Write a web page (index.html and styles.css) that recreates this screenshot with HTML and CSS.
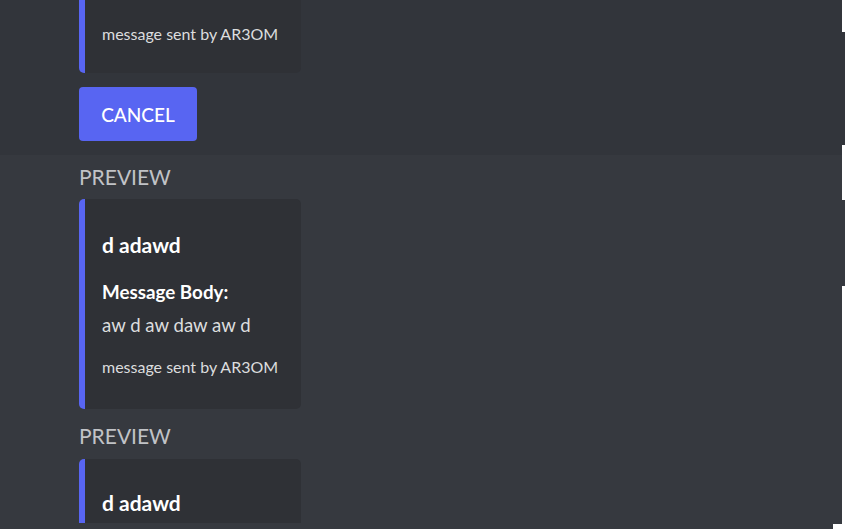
FILE: index.html
```html
<!DOCTYPE html>
<html>
<head>
<meta charset="utf-8">
<link rel="stylesheet" href="styles.css">
</head>
<body>
<div class="page">
  <div class="main">
    <section class="editor">
      <div class="embed embed-cut">
        <div class="embed-footer">message sent by AR3OM</div>
      </div>
      <button class="btn">CANCEL</button>
    </section>
    <section class="previews">
      <div class="preview">
        <div class="label">PREVIEW</div>
        <div class="embed">
          <div class="embed-title">d adawd</div>
          <div class="field-name">Message Body:</div>
          <div class="field-value">aw d aw daw aw d</div>
          <div class="embed-footer">message sent by AR3OM</div>
        </div>
      </div>
      <div class="preview">
        <div class="label">PREVIEW</div>
        <div class="embed embed-partial">
          <div class="embed-title">d adawd</div>
        </div>
      </div>
    </section>
    <div class="bottom-row"><span class="bottom-mark"></span></div>
  </div>
  <div class="edge">
    <span class="seg seg-white s1"></span>
    <span class="seg seg-top s2"></span>
    <span class="seg seg-white s3"></span>
    <span class="seg seg-low s4"></span>
    <span class="seg seg-white s5"></span>
  </div>
</div>
</body>
</html>
```
FILE: styles.css
```css
* { box-sizing: border-box; }
html, body { margin: 0; padding: 0; }
body {
  background: #ffffff;
  font-family: "Lato", "Open Sans", sans-serif;
  color: #dcddde;
  width: 845px;
  height: 529px;
  overflow: hidden;
}
.page {
  display: flex;
  height: 529px;
}
.main {
  width: 842px;
  display: flex;
  flex-direction: column;
  background: #36393f;
}
.editor {
  height: 155px;
  background: #32353b;
  padding-left: 79px;
  display: flex;
  flex-direction: column;
  align-items: flex-start;
}
.embed {
  width: 222px;
  background: #2f3136;
  border-left: 6px solid #5865f2;
  border-radius: 5px;
  padding: 34px 10px 32px 17px;
  white-space: nowrap;
}
.embed-cut {
  border-top-left-radius: 0;
  border-top-right-radius: 0;
  padding-top: 24px;
  padding-bottom: 29px;
}
.embed-partial {
  height: 64px;
  padding-top: 32px;
  overflow: hidden;
  border-bottom-left-radius: 0;
  border-bottom-right-radius: 0;
}
.embed-footer {
  font-size: 16px;
  line-height: 20px;
  color: #dcddde;
}
.btn {
  margin-top: 14px;
  width: 118px;
  height: 54px;
  border: 0;
  border-radius: 4px;
  background: #5865f2;
  color: #ffffff;
  font-family: inherit;
  font-size: 19px;
  font-weight: 500;
  padding: 0;
}
.previews {
  flex: 1;
  padding: 9px 0 0 79px;
  display: flex;
  flex-direction: column;
  gap: 14px;
  overflow: hidden;
}
.preview-last { margin-top: 0; }
.label {
  font-size: 21px;
  line-height: 25px;
  color: #c1c3c7;
  margin-bottom: 10px;
}
.preview + .preview .label {
  margin-bottom: 11px;
}
.embed-title {
  font-size: 21px;
  line-height: 24px;
  font-weight: 700;
  color: #ffffff;
  margin-bottom: 23px;
}
.field-name {
  font-size: 18.8px;
  line-height: 23px;
  font-weight: 700;
  color: #ffffff;
  margin-bottom: 11px;
}
.field-value {
  font-size: 18.6px;
  line-height: 22px;
  color: #dcddde;
  margin-bottom: 21px;
}
.bottom-row {
  height: 5px;
  display: flex;
  justify-content: flex-end;
}
.bottom-mark {
  width: 9px;
  background: #ffffff;
}
.edge {
  width: 3px;
  display: flex;
  flex-direction: column;
}
.seg { display: block; }
.seg-white { background: #ffffff; }
.seg-top { background: #32353b; }
.seg-low { background: #36393f; }
.s1 { height: 32px; }
.s2 { height: 113px; }
.s3 { height: 55px; }
.s4 { height: 86px; }
.s5 { flex: 1; }
```
